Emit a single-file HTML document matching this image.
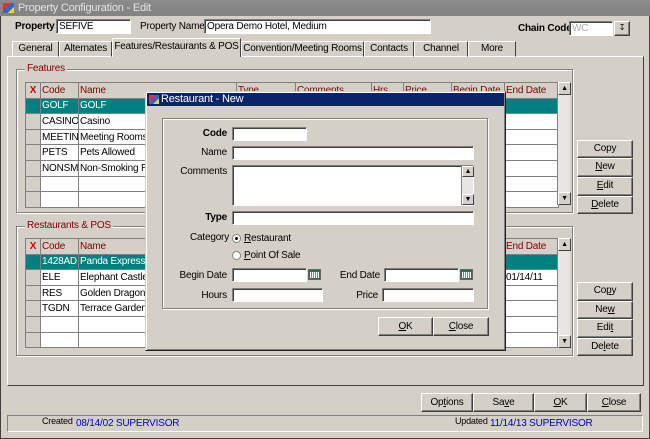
<!DOCTYPE html>
<html><head><style>
*{box-sizing:border-box;margin:0;padding:0}
body{width:650px;height:439px;background:#d4d0c8;font:10px "Liberation Sans",sans-serif;letter-spacing:-0.2px;color:#000;position:relative;overflow:hidden;white-space:nowrap}
.a{position:absolute}
.in{position:absolute;background:#fff;border:1px solid;border-color:#808080 #fff #fff #808080;box-shadow:inset 1px 1px 0 #404040;overflow:hidden}
.btn{position:absolute;background:#d4d0c8;border:1px solid;border-color:#fff #404040 #404040 #fff;box-shadow:inset -1px -1px 0 #808080;text-align:center;line-height:16px}
.grp{position:absolute;border:1px solid #808080;box-shadow:1px 1px 0 #fff, inset 1px 1px 0 #fff}
.lbl{position:absolute;background:#d4d0c8;color:#800000;padding:0 2px}
.r{text-align:right}
table{position:absolute;border-collapse:collapse;background:#fff;table-layout:fixed}
td{border:1px solid #808080;height:15.6px;padding:0 1px;white-space:nowrap;overflow:hidden;line-height:13px}
tr.h td{background:#d4d0c8;color:#800000}
td.x{background:#d4d0c8}
tr.s td{background:#008080;color:#fff}
tr.s td.x{background:#008080}
.sb{position:absolute;background:#e8e6e2;border-left:1px solid #808080}
.ar{position:absolute;left:0;width:13px;height:13px;background:#d4d0c8;border:1px solid;border-color:#fff #404040 #404040 #fff;font-size:7px;text-align:center;line-height:11px}
.tab{position:absolute;top:41px;height:16px;border:1px solid;border-color:#fff #404040 transparent #fff;text-align:center;line-height:14px}
u{text-decoration:underline}
</style></head><body>
<div class="a" style="left:0;top:0;width:650px;height:439px;border:1px solid #404040;border-top:0"></div>
<div class="a" style="left:0;top:0;width:650px;height:16px;background:linear-gradient(#8c8c8c,#828282);color:#e4e4e4;line-height:16px;padding-left:18px;font-size:11px">Property Configuration - Edit</div>
<div class="a" style="left:3px;top:3px;width:11px;height:10px;background:linear-gradient(135deg,#d33 0 40%,#36c 40% 70%,#fc3 70%)"></div>

<div class="a" style="left:15px;top:21px;font-weight:bold">Property</div>
<div class="in" style="left:56px;top:19px;width:75px;height:15px;padding-left:2px;line-height:13px">SEFIVE</div>
<div class="a" style="left:140px;top:21px">Property Name</div>
<div class="in" style="left:204px;top:19px;width:227px;height:15px;padding-left:2px;line-height:13px">Opera Demo Hotel, Medium</div>
<div class="a" style="left:518px;top:23px;font-weight:bold">Chain Code</div>
<div class="in" style="left:569px;top:21px;width:44px;height:15px;color:#aaa;padding-left:2px;line-height:13px">WC</div>
<div class="btn" style="left:614px;top:21px;width:16px;height:15px;font-size:8px;line-height:12px">&#8615;</div>

<div class="a" style="left:7px;top:56px;width:637px;height:330px;border:1px solid;border-color:#fff #404040 #404040 #fff"></div>
<div class="tab" style="left:12px;width:47px">General</div>
<div class="tab" style="left:59px;width:53px">Alternates</div>
<div class="tab" style="left:112px;width:129px;top:38px;height:19px;background:#d4d0c8;border-bottom:0;line-height:16px">Features/Restaurants &amp; POS</div>
<div class="tab" style="left:241px;width:123px">Convention/Meeting Rooms</div>
<div class="tab" style="left:364px;width:50px">Contacts</div>
<div class="tab" style="left:414px;width:54px">Channel</div>
<div class="tab" style="left:468px;width:48px">More</div>

<div class="grp" style="left:16px;top:69px;width:557px;height:144px"></div>
<div class="lbl" style="left:25px;top:63px">Features</div>
<table style="left:25px;top:82px;width:533px">
<colgroup><col style="width:15px"><col style="width:38px"><col style="width:158px"><col style="width:59px"><col style="width:76px"><col style="width:32px"><col style="width:48px"><col style="width:53px"><col style="width:54px"></colgroup>
<tr class="h"><td class="x" style="color:#c00;font-weight:bold;text-align:center">X</td><td>Code</td><td>Name</td><td>Type</td><td>Comments</td><td>Hrs</td><td>Price</td><td>Begin Date</td><td>End Date</td></tr>
<tr class="s"><td class="x"></td><td>GOLF</td><td>GOLF</td><td></td><td></td><td></td><td></td><td></td><td></td></tr>
<tr><td class="x"></td><td>CASINO</td><td>Casino</td><td></td><td></td><td></td><td></td><td></td><td></td></tr>
<tr><td class="x"></td><td>MEETING</td><td>Meeting Rooms</td><td></td><td></td><td></td><td></td><td></td><td></td></tr>
<tr><td class="x"></td><td>PETS</td><td>Pets Allowed</td><td></td><td></td><td></td><td></td><td></td><td></td></tr>
<tr><td class="x"></td><td>NONSMK</td><td>Non-Smoking Rooms</td><td></td><td></td><td></td><td></td><td></td><td></td></tr>
<tr><td class="x"></td><td></td><td></td><td></td><td></td><td></td><td></td><td></td><td></td></tr>
<tr><td class="x"></td><td></td><td></td><td></td><td></td><td></td><td></td><td></td><td></td></tr>
</table>
<div class="sb" style="left:557px;top:82px;width:13px;height:123px"><div class="ar" style="top:0">&#9650;</div><div class="ar" style="bottom:0">&#9660;</div></div>
<div class="btn" style="left:577px;top:140px;width:56px;height:18px">Copy</div>
<div class="btn" style="left:577px;top:158px;width:56px;height:19px"><u>N</u>ew</div>
<div class="btn" style="left:577px;top:177px;width:56px;height:19px"><u>E</u>dit</div>
<div class="btn" style="left:577px;top:196px;width:56px;height:18px"><u>D</u>elete</div>

<div class="grp" style="left:16px;top:226px;width:557px;height:130px"></div>
<div class="lbl" style="left:25px;top:220px">Restaurants &amp; POS</div>
<table style="left:25px;top:238px;width:533px">
<colgroup><col style="width:15px"><col style="width:38px"><col style="width:158px"><col style="width:59px"><col style="width:76px"><col style="width:32px"><col style="width:48px"><col style="width:53px"><col style="width:54px"></colgroup>
<tr class="h"><td class="x" style="color:#c00;font-weight:bold;text-align:center">X</td><td>Code</td><td>Name</td><td></td><td></td><td></td><td></td><td></td><td>End Date</td></tr>
<tr class="s"><td class="x"></td><td>1428AD</td><td>Panda Express</td><td></td><td></td><td></td><td></td><td></td><td></td></tr>
<tr><td class="x"></td><td>ELE</td><td>Elephant Castle</td><td></td><td></td><td></td><td></td><td></td><td>01/14/11</td></tr>
<tr><td class="x"></td><td>RES</td><td>Golden Dragon</td><td></td><td></td><td></td><td></td><td></td><td></td></tr>
<tr><td class="x"></td><td>TGDN</td><td>Terrace Garden</td><td></td><td></td><td></td><td></td><td></td><td></td></tr>
<tr><td class="x"></td><td></td><td></td><td></td><td></td><td></td><td></td><td></td><td></td></tr>
<tr><td class="x"></td><td></td><td></td><td></td><td></td><td></td><td></td><td></td><td></td></tr>
</table>
<div class="sb" style="left:557px;top:238px;width:13px;height:110px"><div class="ar" style="top:0">&#9650;</div><div class="ar" style="bottom:0">&#9660;</div></div>
<div class="btn" style="left:577px;top:282px;width:56px;height:19px">Co<u>p</u>y</div>
<div class="btn" style="left:577px;top:301px;width:56px;height:18px">Ne<u>w</u></div>
<div class="btn" style="left:577px;top:319px;width:56px;height:19px">Edi<u>t</u></div>
<div class="btn" style="left:577px;top:338px;width:56px;height:18px">De<u>l</u>ete</div>

<div class="btn" style="left:421px;top:393px;width:52px;height:19px;line-height:17px">Op<u>t</u>ions</div>
<div class="btn" style="left:473px;top:393px;width:61px;height:19px;line-height:17px">Sa<u>v</u>e</div>
<div class="btn" style="left:534px;top:393px;width:53px;height:19px;line-height:17px"><u>O</u>K</div>
<div class="btn" style="left:587px;top:393px;width:54px;height:19px;line-height:17px"><u>C</u>lose</div>
<div class="a" style="left:7px;top:415px;width:636px;height:17px;border:1px solid;border-color:#808080 #fff #fff #808080"></div>
<div class="a" style="left:42px;top:416px;font-size:9px">Created</div>
<div class="a" style="left:76px;top:418px;color:#0000c0">08/14/02 SUPERVISOR</div>
<div class="a" style="left:455px;top:416px;font-size:9px">Updated</div>
<div class="a" style="left:490px;top:418px;color:#0000c0">11/14/13 SUPERVISOR</div>

<div class="a" style="left:145px;top:91px;width:361px;height:260px;background:#d4d0c8;border:1px solid;border-color:#d4d0c8 #202020 #202020 #d4d0c8;box-shadow:inset 1px 1px 0 #fff,inset -1px -1px 0 #808080"></div>
<div class="a" style="left:147px;top:93px;width:357px;height:13px;background:#0a246a;color:#fff;line-height:13px;padding-left:14px;font-size:11px">Restaurant - New</div>
<div class="a" style="left:149px;top:95px;width:10px;height:9px;background:linear-gradient(135deg,#d33 0 40%,#36c 40% 70%,#fc3 70%)"></div>
<div class="grp" style="left:162px;top:118px;width:326px;height:191px"></div>
<div class="a r" style="left:160px;top:128px;width:67px;font-weight:bold">Code</div>
<div class="in" style="left:232px;top:127px;width:75px;height:14px"></div>
<div class="a r" style="left:160px;top:147px;width:67px">Name</div>
<div class="in" style="left:232px;top:146px;width:242px;height:14px"></div>
<div class="a r" style="left:160px;top:166px;width:67px">Comments</div>
<div class="in" style="left:232px;top:165px;width:242px;height:41px"></div>
<div class="sb" style="left:461px;top:166px;width:12px;height:39px"><div class="ar" style="top:0;width:12px;height:11px;line-height:9px">&#9650;</div><div class="ar" style="bottom:0;width:12px;height:11px;line-height:9px">&#9660;</div></div>
<div class="a r" style="left:160px;top:212px;width:67px;font-weight:bold">Type</div>
<div class="in" style="left:232px;top:211px;width:242px;height:14px"></div>
<div class="a r" style="left:160px;top:232px;width:69px">Category</div>
<div class="a" style="left:232px;top:234px;width:9px;height:9px;border-radius:50%;background:#fff;border:1px solid #808080"><div class="a" style="left:2px;top:2px;width:3px;height:3px;border-radius:50%;background:#000"></div></div>
<div class="a" style="left:244px;top:233px"><u>R</u>estaurant</div>
<div class="a" style="left:232px;top:251px;width:9px;height:9px;border-radius:50%;background:#fff;border:1px solid #808080"></div>
<div class="a" style="left:244px;top:250px"><u>P</u>oint Of Sale</div>
<div class="a r" style="left:160px;top:270px;width:67px">Begin Date</div>
<div class="in" style="left:232px;top:268px;width:75px;height:14px"></div>
<div class="a" style="left:308px;top:269px;width:13px;height:11px;background:#2f6f4f;border:1px solid #666"><div class="a" style="left:1px;top:2px;width:9px;height:6px;background:repeating-linear-gradient(90deg,#fff 0 1px,#789 1px 2px)"></div></div>
<div class="a r" style="left:300px;top:270px;width:80px">End Date</div>
<div class="in" style="left:384px;top:268px;width:75px;height:14px"></div>
<div class="a" style="left:460px;top:269px;width:13px;height:11px;background:#2f6f4f;border:1px solid #666"><div class="a" style="left:1px;top:2px;width:9px;height:6px;background:repeating-linear-gradient(90deg,#fff 0 1px,#789 1px 2px)"></div></div>
<div class="a r" style="left:160px;top:290px;width:67px">Hours</div>
<div class="in" style="left:232px;top:288px;width:91px;height:14px"></div>
<div class="a r" style="left:300px;top:290px;width:78px">Price</div>
<div class="in" style="left:382px;top:288px;width:92px;height:14px"></div>
<div class="btn" style="left:378px;top:317px;width:55px;height:19px;line-height:17px"><u>O</u>K</div>
<div class="btn" style="left:433px;top:317px;width:56px;height:19px;line-height:17px"><u>C</u>lose</div>
</body></html>
